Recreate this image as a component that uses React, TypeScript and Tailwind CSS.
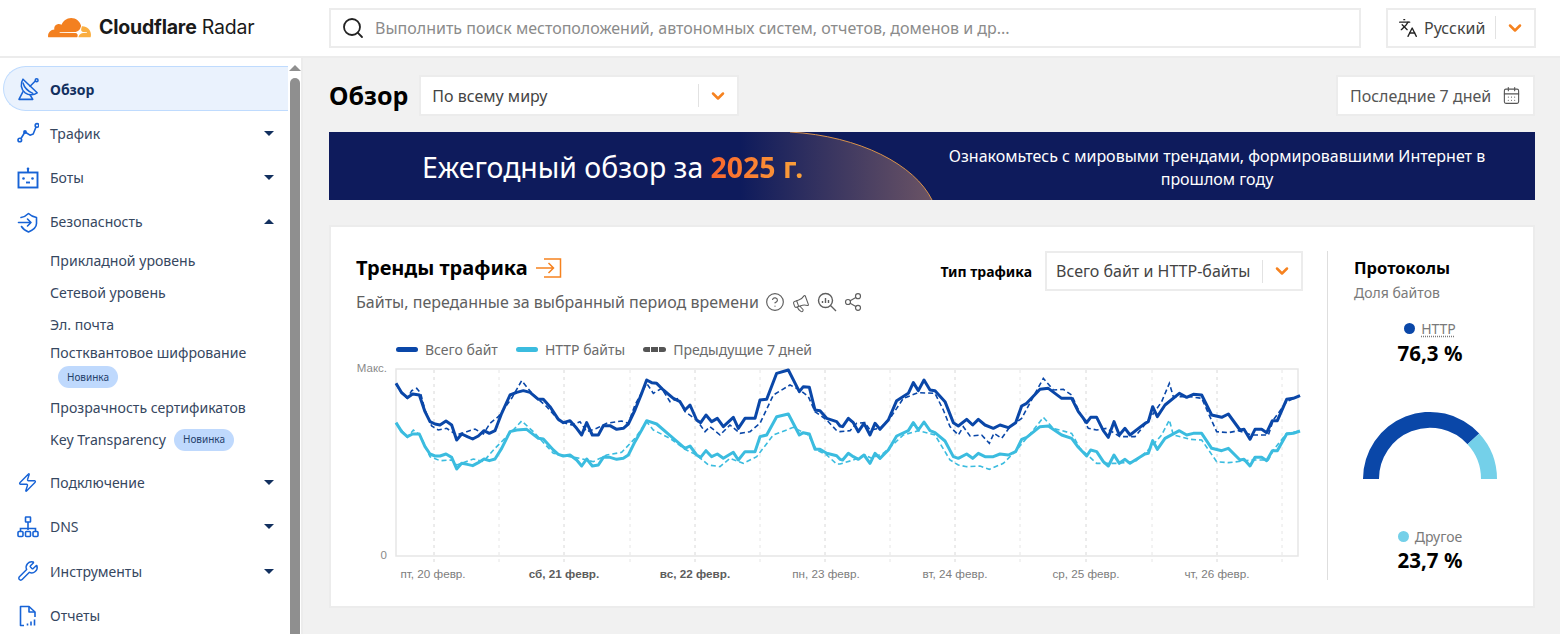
import { ChevronDown, CalendarDays, CircleHelp, Languages, Megaphone, Search, Share2, Wrench, Zap } from 'lucide-react';
import type { ReactNode } from 'react';

type Pt = [number, number];

// points read off the chart: x in two halves, y in 3x coordinates
const toPage = (a: Pt[], b: Pt[]) =>
  [...a.map(([x, y]) => `${380 + x / 3},${360 + y / 3}`), ...b.map(([x, y]) => `${840 + x / 3},${360 + y / 3}`)].join(' ');

const totalNow = toPage(
  [[48,70],[65,98],[82,113],[98,102],[118,105],[135,155],[150,185],[165,192],[180,195],[198,183],[215,195],[230,240],[245,222],[262,230],[278,237],[295,228],[312,212],[328,220],[345,212],[365,160],[390,105],[410,97],[430,92],[450,97],[475,118],[490,118],[510,140],[535,178],[550,188],[570,182],[590,205],[605,225],[620,188],[637,225],[655,225],[670,197],[690,197],[710,208],[730,205],[745,192],[765,150],[785,100],[800,60],[815,68],[830,70],[850,90],[880,115],[900,125],[915,150],[930,135],[950,180],[962,188],[978,165],[995,185],[1012,175],[1030,200],[1060,172],[1075,205],[1095,175],[1125,175],[1140,120],[1160,118],[1190,40],[1225,30],[1258,95],[1270,80],[1288,82],[1305,150],[1320,152],[1340,175],[1370,185],[1380,198]],
  [[8,200],[25,175],[40,188],[55,215],[72,190],[90,225],[105,190],[120,208],[145,180],[170,122],[205,100],[220,68],[235,92],[252,60],[270,90],[285,92],[315,125],[340,188],[355,198],[380,178],[398,195],[415,178],[435,195],[460,205],[480,195],[505,203],[527,188],[545,138],[560,130],[600,88],[625,85],[665,115],[695,115],[715,155],[740,188],[752,172],[770,172],[790,212],[805,232],[822,185],[838,225],[855,205],[870,225],[915,190],[925,185],[938,140],[952,170],[975,135],[1018,100],[1040,112],[1060,103],[1085,105],[1115,165],[1145,172],[1165,162],[1200,210],[1212,208],[1230,238],[1245,208],[1265,208],[1280,218],[1297,182],[1312,182],[1340,118],[1360,115],[1380,107]],
);
const httpNow = toPage(
  [[48,188],[65,215],[82,230],[98,222],[118,222],[135,260],[150,282],[165,288],[180,288],[198,282],[215,292],[230,327],[245,310],[262,313],[278,317],[295,308],[312,297],[328,302],[345,297],[365,265],[390,215],[410,210],[440,208],[475,235],[490,237],[520,270],[535,283],[550,288],[570,285],[590,300],[605,318],[620,297],[637,318],[655,315],[670,292],[690,292],[710,298],[730,295],[745,285],[765,245],[785,210],[800,182],[830,192],[880,235],[915,265],[930,258],[950,285],[962,292],[978,272],[995,290],[1012,282],[1030,295],[1060,277],[1075,300],[1095,275],[1125,275],[1140,230],[1160,225],[1190,170],[1225,162],[1258,225],[1270,218],[1288,222],[1305,268],[1320,268],[1340,280],[1370,287],[1380,298]],
  [[8,300],[25,280],[40,290],[55,298],[72,285],[90,310],[105,280],[120,295],[145,270],[170,228],[205,212],[220,188],[235,210],[252,186],[270,212],[285,218],[315,243],[340,290],[355,295],[380,282],[398,295],[415,280],[435,290],[460,290],[480,282],[505,285],[527,275],[545,238],[560,232],[600,200],[625,198],[665,225],[695,235],[715,262],[740,288],[752,270],[770,275],[790,305],[805,318],[822,285],[838,310],[855,298],[870,310],[915,282],[925,280],[938,242],[952,268],[975,235],[1018,212],[1040,225],[1060,220],[1085,220],[1115,265],[1145,272],[1165,265],[1200,300],[1212,298],[1230,318],[1245,292],[1265,292],[1280,302],[1297,272],[1312,272],[1340,222],[1360,220],[1380,213]],
);
const totalPrev = toPage(
  [[48,72],[65,100],[82,115],[95,92],[110,85],[122,100],[135,150],[155,198],[175,210],[200,205],[230,225],[260,215],[285,207],[310,222],[330,190],[355,170],[395,115],[425,62],[460,105],[500,140],[540,185],[575,195],[600,185],[620,215],[650,205],[680,190],[725,183],[745,190],[765,135],[800,70],[820,100],[845,85],[870,125],[895,115],[915,155],[950,180],[975,215],[990,200],[1020,225],[1050,195],[1080,220],[1110,215],[1140,190],[1180,105],[1230,75],[1260,90],[1285,110],[1305,155],[1340,180],[1370,212]],
  [[0,215],[30,212],[50,190],[75,188],[90,210],[120,205],[150,175],[190,115],[235,98],[285,100],[310,150],[330,200],[355,225],[370,200],[390,228],[425,225],[448,250],[462,220],[485,235],[510,200],[545,175],[580,110],[610,55],[640,90],[670,88],[695,105],[720,160],[745,205],[770,210],[800,205],[840,230],[885,230],[930,175],[965,125],[988,70],[1000,110],[1050,110],[1085,115],[1130,215],[1165,218],[1195,212],[1235,225],[1285,225],[1300,180],[1340,125],[1380,107]],
);
const httpPrev = toPage(
  [[48,190],[82,232],[100,210],[120,225],[150,290],[180,302],[215,300],[230,315],[280,297],[310,305],[345,265],[395,215],[425,183],[460,215],[520,280],[570,290],[600,295],[640,305],[680,285],[725,277],[765,235],[800,185],[820,210],[870,235],[915,268],[950,285],[985,315],[1020,320],[1050,295],[1090,310],[1130,290],[1180,225],[1240,202],[1285,225],[1310,270],[1340,285],[1370,312]],
  [[0,312],[40,300],[75,285],[95,295],[130,280],[190,225],[235,212],[285,225],[330,300],[355,315],[380,320],[420,318],[448,328],[490,310],[530,270],[580,210],[610,172],[640,205],[695,220],[720,265],[770,310],[830,310],[885,305],[930,265],[965,225],[988,180],[1000,225],[1050,238],[1085,240],[1130,305],[1165,308],[1235,300],[1285,300],[1300,270],[1340,220],[1380,213]],
);

const gridX = [434, 499, 564, 630, 695, 760, 825, 890, 955, 1020, 1086, 1152, 1217, 1282];
const dayLabels: [number, string, boolean][] = [
  [433, 'пт, 20 февр.', false],
  [564, 'сб, 21 февр.', true],
  [695, 'вс, 22 февр.', true],
  [826, 'пн, 23 февр.', false],
  [955, 'вт, 24 февр.', false],
  [1086, 'ср, 25 февр.', false],
  [1217, 'чт, 26 февр.', false],
];

const iconBlue = '#1763d6';

function DishIcon() {
  return (
    <svg width="24" height="24" viewBox="0 0 22 22" fill="none" stroke={iconBlue} strokeWidth="1.4" strokeLinejoin="round" strokeLinecap="round" className="mr-[9px]">
      <path d="M5.500 2C2.800 6 3.500 11.500 7.500 14.500 11 17 15.500 16.500 18.500 14.500Z" />
      <path d="M5.500 5.500C6.500 9 10 13 14.500 15" />
      <path d="M12 8.500 17 3.500" />
      <circle cx="18" cy="3" r="1.300" />
      <path d="M5.500 13.500 1.800 20.500H14.500L12 16.500" />
    </svg>
  );
}

function TrafficIcon() {
  return (
    <svg width="22" height="22" viewBox="0 0 22 22" fill="none" stroke={iconBlue} strokeWidth="1.600">
      <circle cx="2.800" cy="18" r="1.800" />
      <circle cx="20" cy="3.400" r="1.800" />
      <path d="M4 16.500 8 10l5 3.200 3.200-1.200 2.800-7" strokeLinejoin="round" />
      <circle cx="8" cy="10" r="1.100" fill={iconBlue} />
    </svg>
  );
}

function BotIcon() {
  return (
    <svg width="22" height="22" viewBox="0 0 22 22" fill="none" stroke={iconBlue} strokeWidth="1.900">
      <rect x="1.500" y="5.500" width="19" height="15" />
      <path d="M11 2v4" />
      <circle cx="11" cy="1.800" r="1.300" fill={iconBlue} stroke="none" />
      <circle cx="6.500" cy="11.500" r="1.300" fill={iconBlue} stroke="none" />
      <circle cx="15.500" cy="11.500" r="1.300" fill={iconBlue} stroke="none" />
      <path d="M9 15.500h4" />
    </svg>
  );
}

function ShieldArrowIcon() {
  return (
    <svg width="22" height="22" viewBox="0 0 22 22" fill="none" stroke={iconBlue} strokeWidth="1.600" strokeLinecap="round" strokeLinejoin="round">
      <path d="M4 6.500C7 6 9 5 11.500 2.500 14 5 16.500 6 19.500 6.500v6c0 4-3.500 6.500-8 8.500-3-1.300-5.500-3-7-5.500" />
      <path d="M1.500 11.500H14M10.500 8l3.500 3.500L10.500 15" />
    </svg>
  );
}

function DnsIcon() {
  return (
    <svg width="22" height="22" viewBox="0 0 22 22" fill="none" stroke={iconBlue} strokeWidth="1.600">
      <rect x="8.500" y="1" width="5" height="5" rx="0.500" />
      <path d="M11 6v8M3.500 15.500v-3h15v3" />
      <rect x="1" y="15.500" width="5" height="5" rx="1" />
      <rect x="8.500" y="15.500" width="5" height="5" rx="1" />
      <rect x="16" y="15.500" width="5" height="5" rx="1" />
    </svg>
  );
}

function ReportIcon() {
  return (
    <svg width="22" height="22" viewBox="0 0 22 22" fill="none" stroke={iconBlue} strokeWidth="1.600" strokeLinejoin="round">
      <path d="M7 20.500H3.500V1.500H12l6 5.500v5" />
      <path d="M12 1.500V7h6" />
      <path d="M10.500 20.500v-2M14 20.500v-4M17.500 20.500v-6" />
    </svg>
  );
}

function NavRow({ icon, label, caret }: { icon: ReactNode; label: string; caret?: 'up' | 'down' }) {
  return (
    <div className="flex h-[44.4px] items-center pl-[17px] pr-[16px] text-[14px] text-[#36475f]">
      <span className="flex w-[33px] shrink-0 items-center">{icon}</span>
      <span className="flex-1">{label}</span>
      {caret === 'down' && <span className="h-0 w-0 border-x-[5px] border-t-[5px] border-x-transparent border-t-[#12305f]" />}
      {caret === 'up' && <span className="h-0 w-0 border-x-[5px] border-b-[5px] border-x-transparent border-b-[#12305f]" />}
    </div>
  );
}

function NewBadge() {
  return <span className="inline-flex h-[22px] w-[60px] items-center justify-center rounded-full bg-[#bfd9fd] text-[10px] text-[#24406b]">Новинка</span>;
}

function SelectChevron() {
  return (
    <span className="flex items-center">
      <span className="h-[23px] w-px bg-[#e2e2e2]" />
      <ChevronDown size={20} strokeWidth={3} className="mx-[9px] text-[#f6821f]" />
    </span>
  );
}

function Sidebar() {
  return (
    <aside className="flex h-full w-[303px] shrink-0 border-r-2 border-[#ececec] bg-white">
      <nav className="w-[288px] shrink-0 pt-[8px] pl-[3px]">
        <div className="flex h-[45px] items-center rounded-l-full border border-r-0 border-[#bfdbfe] bg-[#eaf2fd] pt-[1px] pl-[13px] text-[14px] font-bold text-[#12305f]">
          <DishIcon />
          Обзор
        </div>
        <div className="-ml-[3px] w-[290px]">
          <NavRow icon={<TrafficIcon />} label="Трафик" caret="down" />
          <NavRow icon={<BotIcon />} label="Боты" caret="down" />
          <NavRow icon={<ShieldArrowIcon />} label="Безопасность" caret="up" />
          <div className="flex flex-col pl-[50px] text-[14.100px] text-[#36475f]">
            <div className="flex h-[32px] items-center pt-[1px]">Прикладной уровень</div>
            <div className="flex h-[33px] items-center">Сетевой уровень</div>
            <div className="flex h-[31px] items-center">Эл. почта</div>
            <div className="flex h-[25px] items-center">Постквантовое шифрование</div>
            <div className="flex h-[24px] items-center pl-[8px]"><NewBadge /></div>
            <div className="flex h-[37px] items-center">Прозрачность сертификатов</div>
            <div className="flex h-[27px] items-center gap-[8px]">Key Transparency <NewBadge /></div>
          </div>
          <div className="h-[7px]" />
          <NavRow icon={<Zap size={21} strokeWidth={1.6} style={{ color: iconBlue }} />} label="Подключение" caret="down" />
          <NavRow icon={<DnsIcon />} label="DNS" caret="down" />
          <NavRow icon={<Wrench size={22} strokeWidth={1.6} style={{ color: iconBlue }} />} label="Инструменты" caret="down" />
          <NavRow icon={<ReportIcon />} label="Отчеты" />
        </div>
      </nav>
      {/* scrollbar */}
      <div className="flex flex-1 flex-col items-center pt-[7px]">
        <span className="h-0 w-0 border-x-[6px] border-b-[6px] border-x-transparent border-b-[#8f8f8f]" />
        <span className="mt-[7px] w-[10px] flex-1 rounded-t-full bg-[#8f8f8f]" />
      </div>
    </aside>
  );
}

function TrendChart() {
  return (
    <svg width="955" height="225" viewBox="350 360 955 225" className="block">
      <path d="M396 369H1298V556H396Z" fill="none" stroke="#e6e6e6" strokeWidth="1.500" />
      {gridX.map((x, i) => (
        <line key={x} x1={x} x2={x} y1="370" y2="562" stroke={i % 2 === 0 ? '#d8d8d8' : '#e6e6e6'} strokeWidth="1" strokeDasharray="3 4" />
      ))}
      <text x="387" y="372" textAnchor="end" fontSize="11.500" fill="#8a8a8a" fontFamily="Liberation Sans">Макс.</text>
      <text x="387" y="559" textAnchor="end" fontSize="11.500" fill="#8a8a8a" fontFamily="Liberation Sans">0</text>
      {dayLabels.map(([x, label, bold]) => (
        <text key={label} x={x} y="578" textAnchor="middle" fontSize="11.700" fontWeight={bold ? 700 : 400} fill={bold ? '#5c5c5c' : '#7d7d7d'} fontFamily="Liberation Sans">{label}</text>
      ))}
      <polyline points={totalPrev} fill="none" stroke="#0a47a8" strokeWidth="1.600" strokeDasharray="5 3" />
      <polyline points={httpPrev} fill="none" stroke="#3bbcdf" strokeWidth="1.600" strokeDasharray="5 3" />
      <polyline points={totalNow} fill="none" stroke="#0a47a8" strokeWidth="3" strokeLinejoin="round" />
      <polyline points={httpNow} fill="none" stroke="#3bbcdf" strokeWidth="3" strokeLinejoin="round" />
    </svg>
  );
}

function LegendItem({ color, dashed, label }: { color: string; dashed?: boolean; label: string }) {
  return (
    <span className="flex items-center gap-[7px]">
      {dashed ? (
        <span className="flex gap-[1px]">
          <span className="h-[5px] w-[7px] rounded-l-full bg-[#555]" />
          <span className="h-[5px] w-[7px] bg-[#555]" />
          <span className="h-[5px] w-[7px] rounded-r-full bg-[#555]" />
        </span>
      ) : (
        <span className="h-[5px] w-[22px] rounded-full" style={{ backgroundColor: color }} />
      )}
      {label}
    </span>
  );
}

function ProtocolGauge() {
  return (
    <svg width="136" height="70" viewBox="1363 411 136 70" className="block">
      <path d="M1364 479A67 67 0 0 1 1480.200 433.400L1468.500 444.200A51 51 0 0 0 1380 479Z" fill="#0a47a8" />
      <path d="M1480.200 433.400A67 67 0 0 1 1498 479H1482A51 51 0 0 0 1468.500 444.200Z" fill="#74d0e9" />
    </svg>
  );
}

export default function App() {
  return (
    <div className="flex h-[634px] w-[1560px] flex-col overflow-hidden bg-[#f1f1f1] font-['Noto_Sans',sans-serif]">
      <header className="flex h-[58px] shrink-0 items-center border-b-2 border-[#ececec] bg-white pb-[1px]">
        <div className="flex w-[329px] shrink-0 items-center pl-[48px]">
          <svg width="43" height="22" viewBox="0 5.500 24 12.300" className="-mt-[2px]">
            <path fill="#f38020" d="M16.5088 16.8447c.1475-.5068.0908-.9707-.1553-1.3154-.2246-.3164-.6045-.499-1.0615-.5205l-8.6592-.1123a.1559.1559 0 0 1-.1333-.0713c-.0283-.042-.0351-.0986-.021-.1553.0278-.084.1123-.1484.2036-.1562l8.7359-.1123c1.0351-.0489 2.1601-.8868 2.5537-1.9136l.499-1.3013c.0215-.0561.0293-.1128.0147-.168-.5625-2.5463-2.835-4.4453-5.5499-4.4453-2.5039 0-4.6284 1.6177-5.3876 3.8614-.4927-.3658-1.1187-.5625-1.794-.499-1.2026.119-2.1665 1.083-2.2861 2.2856-.0283.31-.0069.6128.0635.894C1.5683 13.171 0 14.7754 0 16.752c0 .1748.0142.3515.0352.5273.0141.083.0844.1475.1689.1475h15.9814c.0909 0 .1758-.0645.2032-.1553l.12-.4268z" />
            <path fill="#faae40" d="M19.2656 11.2813c-.0771 0-.1611 0-.2383.0112-.0566 0-.1054.0415-.127.0976l-.3378 1.1744c-.1475.5068-.0918.9707.1543 1.3164.2256.3164.6055.498 1.0625.5195l1.8437.1133c.0557 0 .1055.0263.1329.0703.0283.043.0351.1074.0214.1562-.0283.084-.1132.1485-.204.1553l-1.921.1123c-1.041.0488-2.1582.8867-2.5527 1.914l-.1406.3585c-.0283.0713.0215.1416.0986.1416h6.5977c.0771 0 .1474-.0489.169-.126.1122-.4082.1757-.837.1757-1.2803 0-2.6025-2.125-4.727-4.7344-4.727" />
          </svg>
          <span className="ml-[8px] font-['Inter',sans-serif] text-[19.500px] tracking-[-0.2px] text-[#1a1a1a]"><b className="font-bold">Cloudflare</b> Radar</span>
        </div>
        <div className="flex h-[40px] w-[1032px] items-center border-2 border-[#ececec] bg-white pl-[10px] text-[16px] text-[#8b8b8b]">
          <Search size={24} strokeWidth={1.8} className="mr-[10px] text-[#222]" />
          Выполнить поиск местоположений, автономных систем, отчетов, доменов и др...
        </div>
        <div className="ml-[25px] flex h-[40px] w-[150px] items-center border-2 border-[#ececec] bg-white pl-[10px] text-[16px] text-[#444]">
          <Languages size={20} strokeWidth={1.6} className="mr-[6px] text-[#222]" />
          <span className="flex-1">Русский</span>
          <SelectChevron />
        </div>
      </header>

      <div className="flex min-h-0 flex-1">
        <Sidebar />
        <main className="flex-1 pt-[17px] pl-[26px] pr-[25px]">
          <div className="flex h-[41px] items-center">
            <h1 className="text-[25px] font-bold leading-none text-black">Обзор</h1>
            <div className="ml-[11px] flex h-[41px] w-[320px] items-center justify-between border-2 border-[#ececec] bg-white pl-[11px] text-[16px] text-[#444]">
              По всему миру
              <SelectChevron />
            </div>
            <div className="ml-auto flex h-[41px] w-[199px] items-center justify-between border-2 border-[#ececec] bg-white px-[12px] text-[16px] text-[#555]">
              Последние 7 дней
              <CalendarDays size={19} strokeWidth={1.4} className="text-[#555]" />
            </div>
          </div>

          <div className="relative mt-[16px] flex h-[68px] items-center overflow-hidden bg-[#0e1b5c] text-white">
            <svg width="1206" height="68" viewBox="329 132 1206 68" className="absolute top-0 left-0">
              <defs>
                <linearGradient id="bannerArc" x1="0" x2="1" y1="0" y2="0">
                  <stop offset="0" stopColor="#0e1b5c" />
                  <stop offset="1" stopColor="#6a5365" />
                </linearGradient>
              </defs>
              <path d="M790 132C860 136 915 165 932 200H740V132Z" fill="url(#bannerArc)" />
              <path d="M790 132C860 136 915 165 932 200" fill="none" stroke="#d9924a" strokeWidth="1" />
            </svg>
            <div className="relative w-[603px] shrink-0 pt-[3px] pl-[93px] text-[28.400px] whitespace-nowrap">
              Ежегодный обзор за <b className="bg-gradient-to-r from-[#f9642d] to-[#f9a23a] bg-clip-text font-bold text-transparent">2025 г.</b>
            </div>
            <div className="relative w-[570px] pt-[4px] text-center text-[16px] leading-[23px]">
              Ознакомьтесь с мировыми трендами, формировавшими Интернет в прошлом году
            </div>
          </div>

          <section className="mt-[25px] flex h-[383px] border-2 border-[#ececec] bg-white pt-[24px] pl-[19px]">
            <div className="w-[977px] shrink-0">
              <div className="flex items-start pl-[6px] pr-[24px]">
                <div className="flex-1">
                  <h2 className="flex h-[34px] items-center text-[20px] font-bold text-black">
                    Тренды трафика
                    <svg width="28" height="22" viewBox="0 0 28 22" fill="none" stroke="#f6821f" strokeWidth="1.500" className="ml-[7px]">
                      <path d="M9 2h16.500v18H9M1 11h17M13.500 6l5 5-5 5" />
                    </svg>
                  </h2>
                  <div className="mt-[3px] flex h-[28px] items-center text-[16px] text-[#5f5f5f]">
                    Байты, переданные за выбранный период времени
                    <CircleHelp size={20} strokeWidth={1.4} className="ml-[6px] text-[#5f5f5f]" />
                    <Megaphone size={18} strokeWidth={1.4} className="ml-[7px] mt-[3px] -rotate-[20deg] text-[#5f5f5f]" />
                    <svg width="20" height="20" viewBox="0 0 20 20" fill="none" stroke="#5f5f5f" strokeWidth="1.400" className="ml-[7px]">
                      <circle cx="8.500" cy="8.500" r="7" />
                      <path d="M13.500 13.500 19 19M5.500 11V9M8.500 11V6M11.500 11V8" />
                    </svg>
                    <Share2 size={20} strokeWidth={1.4} className="ml-[6px] text-[#5f5f5f]" />
                  </div>
                </div>
                <div className="flex items-center gap-[13px]">
                  <span className="text-[14px] font-bold text-black">Тип трафика</span>
                  <div className="flex h-[40px] w-[258px] items-center justify-between border-2 border-[#ececec] bg-white pl-[9px] text-[16px] text-[#444]">
                    Всего байт и HTTP-байты
                    <SelectChevron />
                  </div>
                </div>
              </div>
              <div className="mt-[21px] flex h-[24px] items-center gap-[18px] pl-[46px] text-[14px] text-[#6b6b6b]">
                <LegendItem color="#0a47a8" label="Всего байт" />
                <LegendItem color="#3bbcdf" label="HTTP байты" />
                <LegendItem color="#555555" dashed label="Предыдущие 7 дней" />
              </div>
              <div className="mt-[-1px]">
                <TrendChart />
              </div>
            </div>
            <div className="h-[329px] w-px shrink-0 bg-[#dedede]" />
            <div className="flex flex-1 flex-col pl-[25px] pr-[26px]">
              <div className="pt-[5px] pl-[1px] text-[16.500px] font-bold text-black">Протоколы</div>
              <div className="pl-[1px] text-[14px] leading-[24px] text-[#7a7a7a]">Доля байтов</div>
              <div className="mt-[14px] flex flex-col items-center">
                <span className="flex h-[20px] items-center gap-[6px] text-[14px] text-[#7a7a7a]">
                  <span className="h-[11px] w-[11px] rounded-full bg-[#0a47a8]" />
                  <span className="underline decoration-dotted underline-offset-2">HTTP</span>
                </span>
                <span className="text-[20.500px] font-bold leading-[28px] text-black">76,3 %</span>
              </div>
              <div className="mt-[44px] flex justify-center"><ProtocolGauge /></div>
              <div className="mt-[46px] flex flex-col items-center">
                <span className="flex h-[20px] items-center gap-[6px] text-[14px] text-[#7a7a7a]">
                  <span className="h-[11px] w-[11px] rounded-full bg-[#74d0e9]" />
                  Другое
                </span>
                <span className="text-[20.500px] font-bold leading-[26px] text-black">23,7 %</span>
              </div>
            </div>
          </section>
        </main>
      </div>
    </div>
  );
}
